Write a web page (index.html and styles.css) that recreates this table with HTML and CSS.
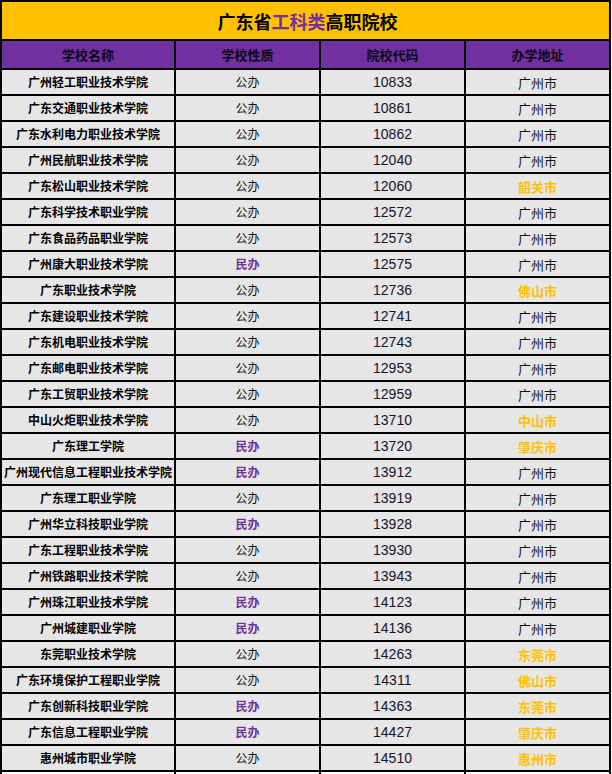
FILE: index.html
```html
<!DOCTYPE html>
<html lang="zh-CN">
<head>
<meta charset="utf-8">
<title>广东省工科类高职院校</title>
<link rel="stylesheet" href="styles.css">
</head>
<body>
<div class="sheet">
  <div class="title">广东省<span class="hl">工科类</span>高职院校</div>
  <div class="hd">学校名称</div><div class="hd">学校性质</div><div class="hd">院校代码</div><div class="hd">办学地址</div>

  <div class="c name">广州轻工职业技术学院</div><div class="c pub">公办</div><div class="c num">10833</div><div class="c city">广州市</div>
  <div class="c name">广东交通职业技术学院</div><div class="c pub">公办</div><div class="c num">10861</div><div class="c city">广州市</div>
  <div class="c name">广东水利电力职业技术学院</div><div class="c pub">公办</div><div class="c num">10862</div><div class="c city">广州市</div>
  <div class="c name">广州民航职业技术学院</div><div class="c pub">公办</div><div class="c num">12040</div><div class="c city">广州市</div>
  <div class="c name">广东松山职业技术学院</div><div class="c pub">公办</div><div class="c num">12060</div><div class="c city other">韶关市</div>
  <div class="c name">广东科学技术职业学院</div><div class="c pub">公办</div><div class="c num">12572</div><div class="c city">广州市</div>
  <div class="c name">广东食品药品职业学院</div><div class="c pub">公办</div><div class="c num">12573</div><div class="c city">广州市</div>
  <div class="c name">广州康大职业技术学院</div><div class="c priv">民办</div><div class="c num">12575</div><div class="c city">广州市</div>
  <div class="c name">广东职业技术学院</div><div class="c pub">公办</div><div class="c num">12736</div><div class="c city other">佛山市</div>
  <div class="c name">广东建设职业技术学院</div><div class="c pub">公办</div><div class="c num">12741</div><div class="c city">广州市</div>
  <div class="c name">广东机电职业技术学院</div><div class="c pub">公办</div><div class="c num">12743</div><div class="c city">广州市</div>
  <div class="c name">广东邮电职业技术学院</div><div class="c pub">公办</div><div class="c num">12953</div><div class="c city">广州市</div>
  <div class="c name">广东工贸职业技术学院</div><div class="c pub">公办</div><div class="c num">12959</div><div class="c city">广州市</div>
  <div class="c name">中山火炬职业技术学院</div><div class="c pub">公办</div><div class="c num">13710</div><div class="c city other">中山市</div>
  <div class="c name">广东理工学院</div><div class="c priv">民办</div><div class="c num">13720</div><div class="c city other">肇庆市</div>
  <div class="c name">广州现代信息工程职业技术学院</div><div class="c priv">民办</div><div class="c num">13912</div><div class="c city">广州市</div>
  <div class="c name">广东理工职业学院</div><div class="c pub">公办</div><div class="c num">13919</div><div class="c city">广州市</div>
  <div class="c name">广州华立科技职业学院</div><div class="c priv">民办</div><div class="c num">13928</div><div class="c city">广州市</div>
  <div class="c name">广东工程职业技术学院</div><div class="c pub">公办</div><div class="c num">13930</div><div class="c city">广州市</div>
  <div class="c name">广州铁路职业技术学院</div><div class="c pub">公办</div><div class="c num">13943</div><div class="c city">广州市</div>
  <div class="c name">广州珠江职业技术学院</div><div class="c priv">民办</div><div class="c num">14123</div><div class="c city">广州市</div>
  <div class="c name">广州城建职业学院</div><div class="c priv">民办</div><div class="c num">14136</div><div class="c city">广州市</div>
  <div class="c name">东莞职业技术学院</div><div class="c pub">公办</div><div class="c num">14263</div><div class="c city other">东莞市</div>
  <div class="c name">广东环境保护工程职业学院</div><div class="c pub">公办</div><div class="c num">14311</div><div class="c city other">佛山市</div>
  <div class="c name">广东创新科技职业学院</div><div class="c priv">民办</div><div class="c num">14363</div><div class="c city other">东莞市</div>
  <div class="c name">广东信息工程职业学院</div><div class="c priv">民办</div><div class="c num">14427</div><div class="c city other">肇庆市</div>
  <div class="c name">惠州城市职业学院</div><div class="c pub">公办</div><div class="c num">14510</div><div class="c city other">惠州市</div>

  <div class="c cut"></div><div class="c cut"></div><div class="c cut"></div><div class="c cut"></div>
</div>
</body>
</html>
```
FILE: styles.css
```css
html, body {
  margin: 0;
  padding: 0;
  background: #ffffff;
}

body {
  font-family: "Noto Sans CJK SC", "Noto Sans", sans-serif;
  color: #000;
}

.sheet {
  display: grid;
  grid-template-columns: 172px 143px 143px 143px;
  grid-template-rows: 37px 27px;
  grid-auto-rows: 24px;
  gap: 2px;
  padding: 2px;
  background: #000;
  width: max-content;
}

.title {
  grid-column: 1 / -1;
  background: #ffc000;
  display: flex;
  align-items: center;
  justify-content: center;
  font-size: 18px;
  font-weight: 700;
  padding-left: 4px;
  line-height: 1;
  color: #000;
}

.title .hl {
  color: #7030a0;
}

.hd {
  background: #7030a0;
  display: flex;
  align-items: center;
  justify-content: center;
  font-size: 13px;
  font-weight: 700;
  color: #0a0a14;
  line-height: 1;
}

.c {
  background: #e7e6e6;
  display: flex;
  align-items: center;
  justify-content: center;
  line-height: 1;
  white-space: nowrap;
  overflow: hidden;
}

.name {
  font-size: 12px;
  font-weight: 700;
  color: #000;
}

.pub {
  font-size: 12px;
  font-weight: 400;
  color: #111;
}

.priv {
  font-size: 12px;
  font-weight: 700;
  color: #7030a0;
}

.num {
  font-family: "Liberation Sans", Arial, sans-serif;
  font-size: 14px;
  color: #141428;
}

.city {
  font-size: 13px;
  font-weight: 400;
  color: #111;
}

.city.other {
  color: #ffc000;
  font-weight: 700;
}

.cut {
  background: #ffffff;
}
```
